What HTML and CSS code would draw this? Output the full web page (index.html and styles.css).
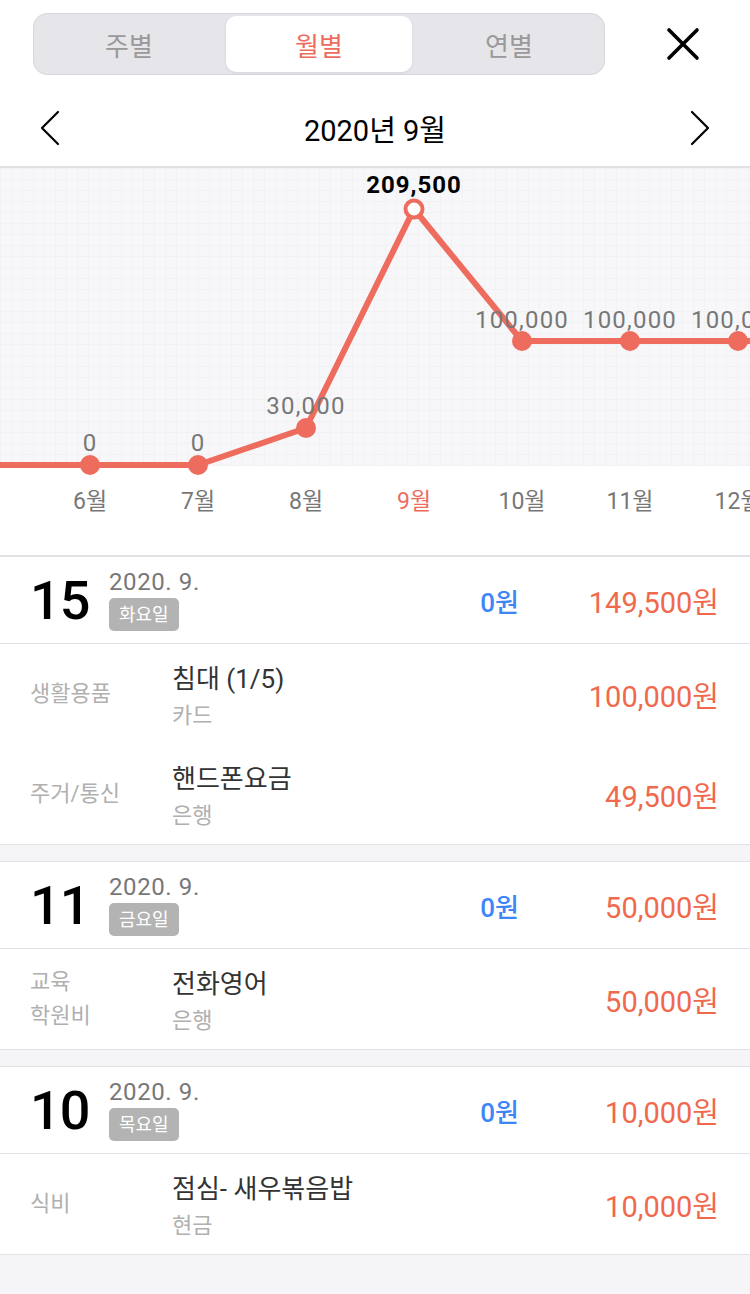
FILE: index.html
```html
<!DOCTYPE html>
<html lang="ko">
<head>
  <meta charset="UTF-8" />
  <meta name="viewport" content="width=device-width, initial-scale=1.0"/>
  <title>월별 지출</title>
  <link rel="stylesheet" href="styles.css">
</head>
<body>
  <header class="top">
    <div class="segment">
      <button class="seg-item">주별</button>
      <button class="seg-item active">월별</button>
      <button class="seg-item">연별</button>
    </div>
    <button class="close" aria-label="닫기">
      <svg width="34" height="34" viewBox="0 0 34 34"><path d="M3 3 L31 31 M31 3 L3 31" stroke="#000" stroke-width="3.6" stroke-linecap="round"/></svg>
    </button>
  </header>

  <nav class="month-nav">
    <button class="arrow" aria-label="이전 달">
      <svg width="22" height="36" viewBox="0 0 22 36"><path d="M19 2 L3 18 L19 34" fill="none" stroke="#000" stroke-width="2.2" stroke-linecap="round" stroke-linejoin="round"/></svg>
    </button>
    <h1 class="month-title">2020년 9월</h1>
    <button class="arrow" aria-label="다음 달">
      <svg width="22" height="36" viewBox="0 0 22 36"><path d="M3 2 L19 18 L3 34" fill="none" stroke="#000" stroke-width="2.2" stroke-linecap="round" stroke-linejoin="round"/></svg>
    </button>
  </nav>

  <section class="chart">
    <svg width="750" height="387" viewBox="0 0 750 387">
      <defs>
        <pattern id="grid" width="11" height="11" patternUnits="userSpaceOnUse">
          <path d="M11 0 L0 0 L0 11" fill="none" stroke="#eeeef2" stroke-width="1"/>
        </pattern>
      </defs>
      <rect x="0" y="0" width="750" height="298" fill="#f7f7f9"/>
      <rect x="0" y="0" width="750" height="298" fill="url(#grid)"/>
      <polyline points="-18,297 90,297 198,297 306,260 414,41 522,173 630,173 738,173 846,173" fill="none" stroke="#ee6c5e" stroke-width="6" stroke-linejoin="round"/>
      <g fill="#ee6c5e">
        <circle cx="90" cy="297" r="10"/>
        <circle cx="198" cy="297" r="10"/>
        <circle cx="306" cy="260" r="10"/>
        <circle cx="522" cy="173" r="10"/>
        <circle cx="630" cy="173" r="10"/>
        <circle cx="738" cy="173" r="10"/>
      </g>
      <circle cx="414" cy="41" r="8.5" fill="#fff" stroke="#ee6c5e" stroke-width="4"/>
      <g class="val" text-anchor="middle">
        <text x="90" y="283">0</text>
        <text x="198" y="283">0</text>
        <text x="306" y="246">30,000</text>
        <text x="522" y="160">100,000</text>
        <text x="630" y="160">100,000</text>
        <text x="738" y="160">100,000</text>
      </g>
      <text class="val-top" x="414" y="25" text-anchor="middle">209,500</text>
      <g class="mon" text-anchor="middle">
        <text x="90" y="341">6월</text>
        <text x="198" y="341">7월</text>
        <text x="306" y="341">8월</text>
        <text class="cur" x="414" y="341">9월</text>
        <text x="522" y="341">10월</text>
        <text x="630" y="341">11월</text>
        <text x="738" y="341">12월</text>
      </g>
    </svg>
  </section>

  <main class="days">
    <div class="day first">
      <div class="day-head">
        <span class="day-num">15</span>
        <div class="day-date">
          <span class="ym">2020. 9.</span>
          <span class="weekday">화요일</span>
        </div>
        <span class="income">0원</span>
        <span class="total">149,500원</span>
      </div>
      <div class="entry">
        <div class="cat">생활용품</div>
        <div class="info">
          <div class="title">침대 (1/5)</div>
          <div class="method">카드</div>
        </div>
        <div class="amount">100,000원</div>
      </div>
      <div class="entry">
        <div class="cat">주거/통신</div>
        <div class="info">
          <div class="title">핸드폰요금</div>
          <div class="method">은행</div>
        </div>
        <div class="amount">49,500원</div>
      </div>
    </div>

    <div class="day">
      <div class="day-head">
        <span class="day-num">11</span>
        <div class="day-date">
          <span class="ym">2020. 9.</span>
          <span class="weekday">금요일</span>
        </div>
        <span class="income">0원</span>
        <span class="total">50,000원</span>
      </div>
      <div class="entry">
        <div class="cat">교육<br>학원비</div>
        <div class="info">
          <div class="title">전화영어</div>
          <div class="method">은행</div>
        </div>
        <div class="amount">50,000원</div>
      </div>
    </div>

    <div class="day">
      <div class="day-head">
        <span class="day-num">10</span>
        <div class="day-date">
          <span class="ym">2020. 9.</span>
          <span class="weekday">목요일</span>
        </div>
        <span class="income">0원</span>
        <span class="total">10,000원</span>
      </div>
      <div class="entry">
        <div class="cat">식비</div>
        <div class="info">
          <div class="title">점심- 새우볶음밥</div>
          <div class="method">현금</div>
        </div>
        <div class="amount">10,000원</div>
      </div>
    </div>
  </main>
</body>
</html>
```

FILE: styles.css
```css
:root {
  --red: #f0694c;
  --line-red: #ee6c5e;
  --blue: #3d86f5;
  --border: #e2e2e4;
  --gray-bg: #f5f5f7;
  --muted: #b0b0b0;
}
body {
  margin: 0; background: var(--gray-bg); color: #000;
  font-family: Roboto, "Noto Sans CJK KR", sans-serif;
  min-height: 1294px;
}
button { font-family: inherit; background: none; border: none; padding: 0; cursor: pointer; }

.top {
  background: #fff; display: flex; align-items: center;
  padding: 13px 0 0 33px; height: 62px;
}
.segment {
  box-sizing: border-box; width: 572px; height: 62px; padding: 2px;
  background: #e5e5ea; border: 1px solid #d7d7db; border-radius: 14px;
  display: flex;
}
.seg-item {
  flex: 1; font-size: 26px; color: #999; border-radius: 10px;
}
.seg-item.active {
  background: #fff; color: var(--line-red); margin: 0 4px;
  box-shadow: 0 1px 3px rgba(0,0,0,0.08);
}
.close { margin-left: 61px; width: 34px; height: 34px; display: flex; }

.month-nav {
  background: #fff; display: flex; align-items: center; justify-content: space-between;
  height: 76px; padding: 15px 39px 0 39px; border-bottom: 2px solid var(--border);
}
.arrow { display: flex; width: 22px; }
.month-title { margin: 0; font-size: 29px; font-weight: 400; }

.chart { background: #fff; height: 387px; border-bottom: 2px solid var(--border); overflow: hidden; }
.chart svg { display: block; }
.val text { font-size: 24px; fill: #777; letter-spacing: 1.2px; }
.val-top { font-size: 24px; font-weight: 700; fill: #000; letter-spacing: 1px; }
.mon text { font-size: 23px; fill: #777; }
.mon text.cur { fill: var(--line-red); }

.day {
  background: #fff; border-top: 1px solid var(--border); border-bottom: 1px solid var(--border);
  margin-bottom: 16px;
}
.day.first { border-top: none; }
.day-head {
  display: flex; align-items: center; height: 86px; padding: 0 31px 0 30px;
  border-bottom: 1px solid var(--border);
}
.day-num { font-size: 54px; font-weight: 500; width: 79px; letter-spacing: -1px; }
.day-date { display: flex; flex-direction: column; align-items: flex-start; gap: 2px; margin-top: -2px; flex: 1; }
.ym { font-size: 24px; color: #777; line-height: 28px; letter-spacing: 0.6px; }
.weekday {
  background: #b3b3b3; color: #fff; font-size: 18px; line-height: 33px;
  padding: 0 10px; border-radius: 5px;
}
.income { color: var(--blue); font-size: 26px; font-weight: 500; }
.total { width: 200px; text-align: right; color: var(--red); font-size: 29px; }

.entry { display: flex; align-items: center; height: 100px; padding: 0 31px 0 30px; }
.cat { width: 142px; font-size: 22px; color: var(--muted); line-height: 34px; }
.info { flex: 1; padding-top: 5px; }
.title { font-size: 26px; color: #333; line-height: 34px; }
.method { font-size: 22px; color: var(--muted); line-height: 30px; margin-top: 5px; }
.amount { color: var(--red); font-size: 29px; }
```
